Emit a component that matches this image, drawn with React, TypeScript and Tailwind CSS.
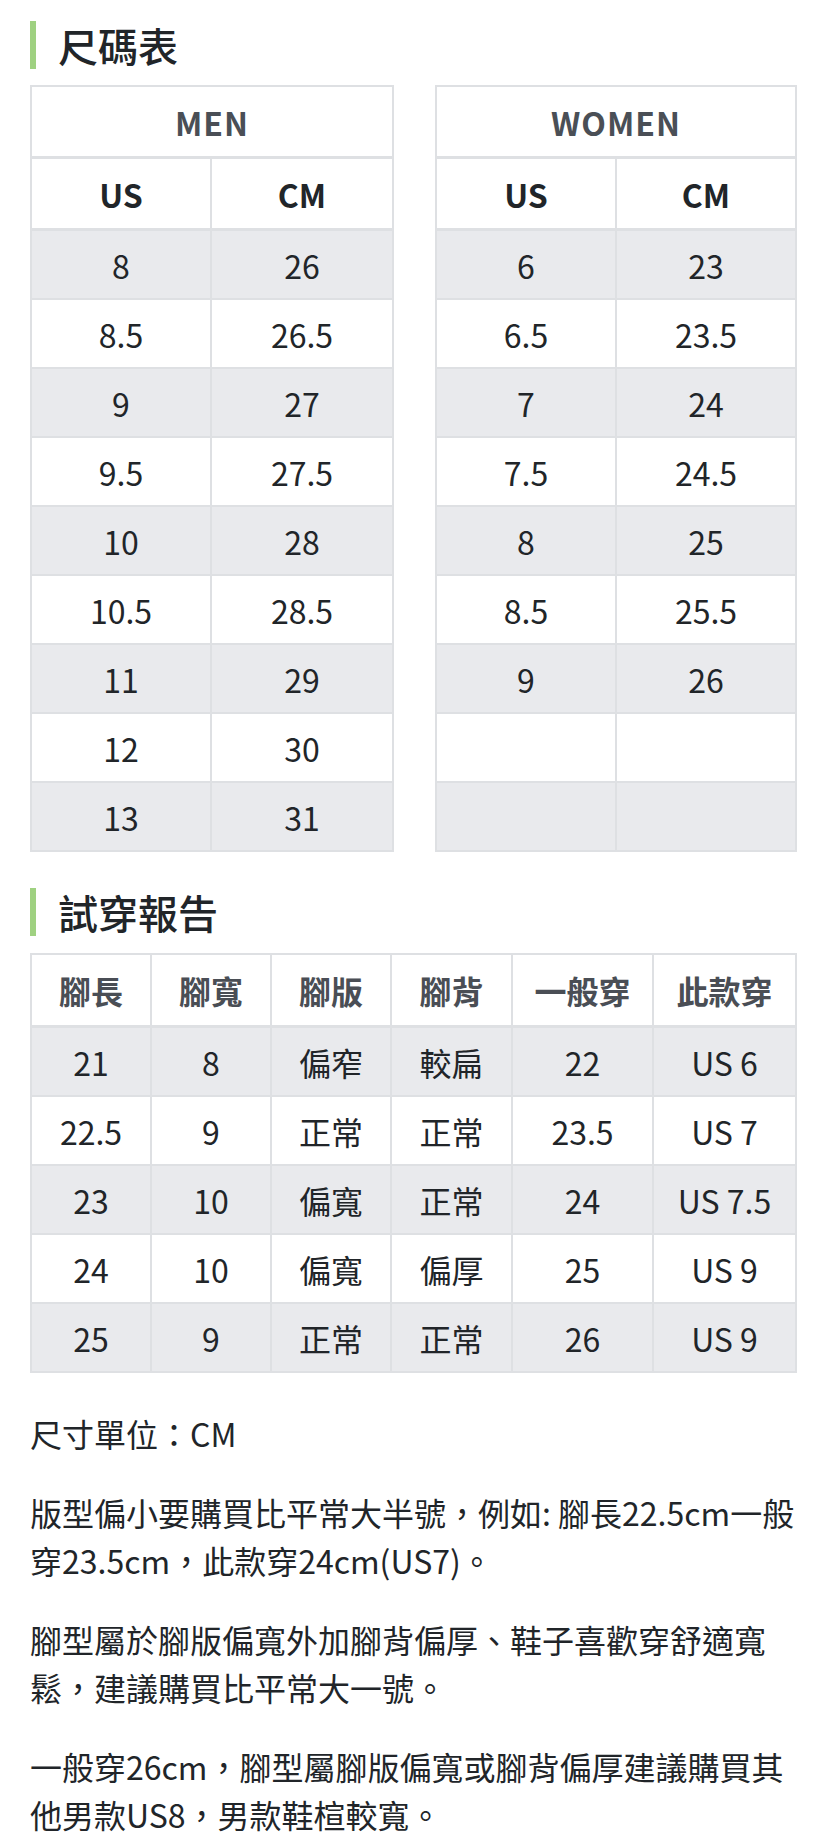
import React from 'react';

const men = [
  ['8', '26'],
  ['8.5', '26.5'],
  ['9', '27'],
  ['9.5', '27.5'],
  ['10', '28'],
  ['10.5', '28.5'],
  ['11', '29'],
  ['12', '30'],
  ['13', '31'],
];

const women = [
  ['6', '23'],
  ['6.5', '23.5'],
  ['7', '24'],
  ['7.5', '24.5'],
  ['8', '25'],
  ['8.5', '25.5'],
  ['9', '26'],
  ['', ''],
  ['', ''],
];

const reportHead = ['腳長', '腳寬', '腳版', '腳背', '一般穿', '此款穿'];

const report = [
  ['21', '8', '偏窄', '較扁', '22', 'US 6'],
  ['22.5', '9', '正常', '正常', '23.5', 'US 7'],
  ['23', '10', '偏寬', '正常', '24', 'US 7.5'],
  ['24', '10', '偏寬', '偏厚', '25', 'US 9'],
  ['25', '9', '正常', '正常', '26', 'US 9'],
];

const SectionTitle = ({ children }: { children: React.ReactNode }) => (
  <div className="flex items-center h-[48px]">
    <div className="w-[6px] h-[48px] bg-[#9fd181]" />
    <h2 className="ml-[22px] text-[40px] leading-none font-medium text-[#212529]">{children}</h2>
  </div>
);

const SizeTable = ({ title, rows }: { title: string; rows: string[][] }) => (
  <div className="border-x-2 border-t-2 border-[#dee0e3]">
    <div className="h-[72px] border-b-[3px] border-[#dee0e3] flex items-center justify-center text-[32px] font-bold tracking-[1px] text-[#4a4f56]">
      {title}
    </div>
    <div className="grid grid-cols-[180px_1fr] h-[72px] border-b-[3px] border-[#dee0e3] text-[32px] font-bold text-[#212529]">
      <div className="flex items-center justify-center border-r-2 border-[#dee0e3]">US</div>
      <div className="flex items-center justify-center">CM</div>
    </div>
    {rows.map((row, i) => (
      <div
        key={i}
        className={`grid grid-cols-[180px_1fr] h-[69px] border-b-2 border-[#dee0e3] text-[32px] text-[#212529] ${
          i % 2 === 0 ? 'bg-[#e9eaed]' : 'bg-white'
        }`}
      >
        <div className="flex items-center justify-center border-r-2 border-[#dee0e3]">{row[0]}</div>
        <div className="flex items-center justify-center">{row[1]}</div>
      </div>
    ))}
  </div>
);

export default function App() {
  return (
    <div
      lang="zh-Hant"
      className="min-h-screen bg-white pt-[21px] pl-[30px] pr-[31px] font-['Noto_Sans_CJK_TC','Noto_Sans',sans-serif]"
    >
      <SectionTitle>尺碼表</SectionTitle>

      <div className="mt-[16px] grid grid-cols-[364px_1fr] gap-[41px]">
        <SizeTable title="MEN" rows={men} />
        <SizeTable title="WOMEN" rows={women} />
      </div>

      <div className="mt-[36px]">
        <SectionTitle>試穿報告</SectionTitle>
      </div>

      <div className="mt-[17px] border-x-2 border-t-2 border-[#dee0e3]">
        <div className="grid grid-cols-[120px_120px_120px_121px_141px_1fr] h-[73px] border-b-[3px] border-[#dee0e3] text-[32px] font-bold text-[#4a4e55]">
          {reportHead.map((h, j) => (
            <div
              key={h}
              className={`flex items-center justify-center ${j < 5 ? 'border-r-2 border-[#dee0e3]' : ''}`}
            >
              {h}
            </div>
          ))}
        </div>
        {report.map((row, i) => (
          <div
            key={i}
            className={`grid grid-cols-[120px_120px_120px_121px_141px_1fr] h-[69px] border-b-2 border-[#dee0e3] text-[32px] text-[#212529] ${
              i % 2 === 0 ? 'bg-[#e9eaed]' : 'bg-white'
            }`}
          >
            {row.map((cell, j) => (
              <div
                key={j}
                className={`flex items-center justify-center ${j < 5 ? 'border-r-2 border-[#dee0e3]' : ''}`}
              >
                {cell}
              </div>
            ))}
          </div>
        ))}
      </div>

      <div className="mt-[36px] text-[32px] leading-[48px] text-[#212529]">
        <p>尺寸單位：CM</p>
        <p className="mt-[31px]">版型偏小要購買比平常大半號，例如: 腳長22.5cm一般穿23.5cm，此款穿24cm(US7)。</p>
        <p className="mt-[31px]">腳型屬於腳版偏寬外加腳背偏厚、鞋子喜歡穿舒適寬鬆，建議購買比平常大一號。</p>
        <p className="mt-[31px]">一般穿26cm，腳型屬腳版偏寬或腳背偏厚建議購買其他男款US8，男款鞋楦較寬。</p>
      </div>
    </div>
  );
}
